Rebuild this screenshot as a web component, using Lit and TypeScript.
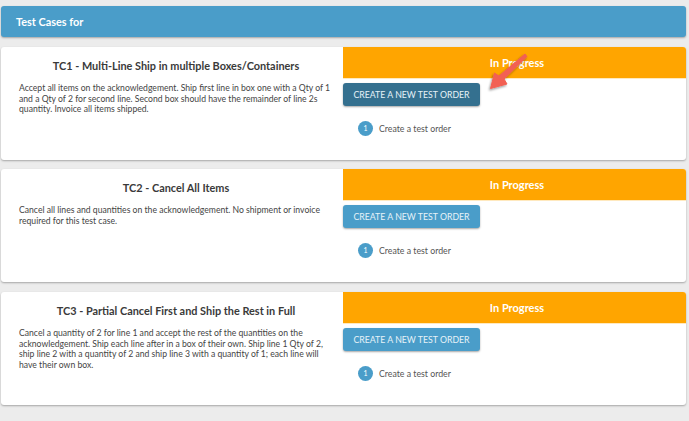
import { LitElement, html, css } from "lit";
import { customElement } from "lit/decorators.js";

const cases = [
  { title: "TC1 - Multi-Line Ship in multiple Boxes/Containers", body: "Accept all items on the acknowledgement. Ship first line in box one with a Qty of 1 and a Qty of 2 for second line. Second box should have the remainder of line 2s quantity. Invoice all items shipped.", hover: true },
  { title: "TC2 - Cancel All Items", body: "Cancel all lines and quantities on the acknowledgement. No shipment or invoice required for this test case.", hover: false },
  { title: "TC3 - Partial Cancel First and Ship the Rest in Full", body: "Cancel a quantity of 2 for line 1 and accept the rest of the quantities on the acknowledgement. Ship each line after in a box of their own. Ship line 1 Qty of 2, ship line 2 with a quantity of 2 and ship line 3 with a quantity of 1; each line will have their own box.", hover: false },
];

@customElement("app-root")
export class AppRoot extends LitElement {
  static styles = css`
    :host { display: block; height: 421px; overflow: hidden; background: #ececec; font-family: Lato, "Open Sans", sans-serif; color: #444; position: relative; }
    .page { display: flex; flex-direction: column; padding: 6px 3px 0 1px; }
    .banner { height: 31px; box-sizing: border-box; background: #4a9dc9; color: #fff; border-radius: 3px; box-shadow: 0 1px 2px rgba(0,0,0,.3); font-size: 10.9px; font-weight: 700; line-height: 31px; padding-left: 15px; margin-bottom: 10px; }
    .card { height: 113px; display: grid; grid-template-columns: 342px 343px; background: #fff; border-radius: 3px; box-shadow: 0 1px 2px rgba(0,0,0,.3); margin-bottom: 10px; overflow: hidden; }
    .card:nth-child(2) { margin-bottom: 9px; }
    .left { padding: 9.5px 10px 0 18px; }
    h2 { margin: 0 0 9.5px; font-size: 10.9px; line-height: 17px; font-weight: 700; color: #3a3a3a; text-align: center; }
    p { margin: 0; font-size: 8.65px; line-height: 10.6px; color: #444; }
    .status { height: 31px; background: #ffa500; color: #fff; font-size: 11px; font-weight: 700; line-height: 32px; text-align: center; border-bottom: 1px solid #ffe9bf; padding-left: 5px; }
    .btn { display: block; width: 137px; height: 23px; margin-top: 4px; border: 0; padding: 0; background: #4a9dc9; color: #e6f2f8; font-family: inherit; font-size: 8.75px; line-height: 23px; text-align: center; border-radius: 3px; box-shadow: 0 1px 2px rgba(0,0,0,.35); white-space: nowrap; }
    .btn.hover { background: #34708f; }
    .step { display: flex; align-items: center; gap: 6px; margin: 14.5px 0 0 15px; font-size: 8.75px; color: #555; }
    .num { width: 15px; height: 15px; border-radius: 50%; background: #4a9dc9; color: #fff; font-size: 7px; display: flex; align-items: center; justify-content: center; }
    .arrow { position: absolute; left: 480px; top: 46px; }
  `;

  render() {
    return html`
      <div class="page">
        <div class="banner">Test Cases for</div>
        ${cases.map((c) => html`
          <div class="card">
            <div class="left"><h2>${c.title}</h2><p>${c.body}</p></div>
            <div>
              <div class="status">In Progress</div>
              <button class="btn ${c.hover ? "hover" : ""}">CREATE A NEW TEST ORDER</button>
              <div class="step"><span class="num">1</span><span>Create a test order</span></div>
            </div>
          </div>`)}
      </div>
      <svg class="arrow" width="56" height="50" viewBox="0 0 56 50">
        <defs><filter id="s" x="-30%" y="-30%" width="160%" height="160%"><feDropShadow dx="-1" dy="1.5" stdDeviation="1.2" flood-color="#000" flood-opacity=".4"/></filter></defs>
        <path d="M45 8 L47 10.5 L24 33 L27 38 L10.5 42.5 L14.5 27 L19 30 Z" fill="#f26052" stroke="#f26052" stroke-width="1" stroke-linejoin="round" filter="url(#s)"/>
      </svg>
    `;
  }
}
